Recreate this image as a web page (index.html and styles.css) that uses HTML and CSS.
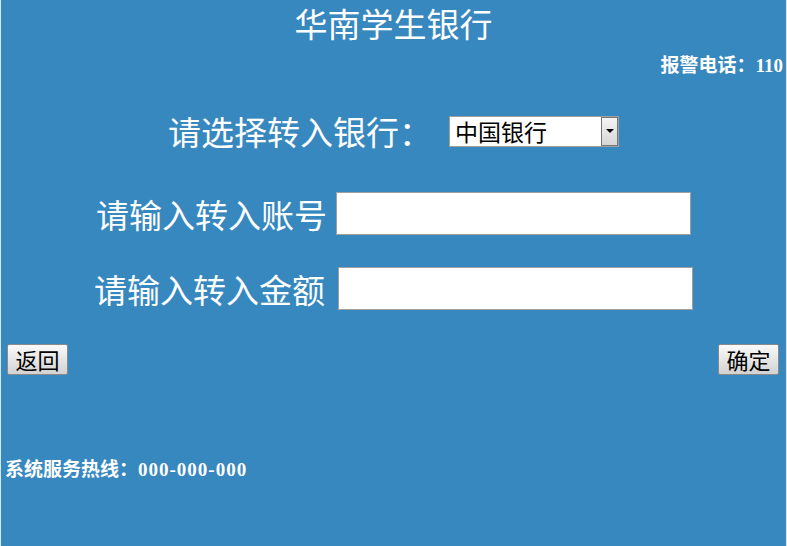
FILE: index.html
```html
<!DOCTYPE html>
<html lang="zh-CN">
<head>
<meta charset="utf-8">
<title>华南学生银行</title>
<link rel="stylesheet" href="styles.css">
</head>
<body>
<div class="page">
  <h1 class="title">华南学生银行</h1>
  <div class="alarm">报警电话：110</div>
  <form class="form">
    <div class="row row-bank">
      <label class="label">请选择转入银行：</label>
      <div class="select-wrap">
        <select class="select">
          <option>中国银行</option>
        </select>
        <span class="select-btn"><span class="tri"></span></span>
      </div>
    </div>
    <div class="row row-acct">
      <label class="label">请输入转入账号</label>
      <input class="input" type="text">
    </div>
    <div class="row row-amt">
      <label class="label">请输入转入金额</label>
      <input class="input" type="text">
    </div>
    <div class="actions">
      <button type="button" class="btn">返回</button>
      <button type="button" class="btn">确定</button>
    </div>
  </form>
  <div class="footer">系统服务热线：<span class="num">000-000-000</span></div>
</div>
</body>
</html>
```

FILE: styles.css
```css
html, body {
  margin: 0;
  padding: 0;
  height: 100%;
}
body {
  background: #3888c0;
  font-family: "Noto Sans CJK SC", sans-serif;
  color: #fff;
}
.page {
  height: 546px;
  box-sizing: border-box;
  border-left: 1px solid #d8e6f2;
  border-right: 1px solid #d8e6f2;
  padding: 0 3px;
}
.title {
  margin: 0;
  padding-top: 3px;
  font-size: 33px;
  line-height: 40px;
  font-weight: normal;
  text-align: center;
  font-family: "Noto Sans CJK SC", serif;
}
.alarm {
  margin-top: 12px;
  text-align: right;
  font-family: "Liberation Serif", "Noto Sans CJK SC", serif;
  font-weight: bold;
  font-size: 19px;
  line-height: 22px;
}
.form {
  margin: 0;
}
.row {
  display: flex;
  justify-content: center;
  align-items: center;
}
.label {
  font-size: 33px;
  line-height: 40px;
}
.row-bank {
  margin-top: 34px;
  gap: 17px;
}
.row-acct {
  margin-top: 41px;
  gap: 9px;
}
.row-amt {
  margin-top: 32px;
  gap: 13px;
}
.select-wrap {
  position: relative;
  width: 170px;
  height: 31px;
}
.select {
  appearance: none;
  -webkit-appearance: none;
  width: 170px;
  height: 31px;
  box-sizing: border-box;
  border: 1px solid #a0a0a0;
  background: #fff;
  font-family: "Noto Sans CJK SC", sans-serif;
  font-size: 23px;
  line-height: 29px;
  color: #000;
  padding: 0 0 0 5px;
  margin: 0;
  border-radius: 0;
}
.select-btn {
  position: absolute;
  right: 1px;
  top: 1px;
  width: 17px;
  height: 29px;
  box-sizing: border-box;
  border: 1px solid #777;
  background: linear-gradient(#f4f4f4, #d6d6d6);
  display: flex;
  align-items: center;
  justify-content: center;
  pointer-events: none;
}
.tri {
  width: 0;
  height: 0;
  border-left: 4px solid transparent;
  border-right: 4px solid transparent;
  border-top: 4px solid #000;
}
.input {
  width: 355px;
  height: 43px;
  box-sizing: border-box;
  border: 1px solid #a0a0a0;
  background: #fff;
  margin: 0;
  padding: 0 4px;
  font-size: 20px;
}
.actions {
  display: flex;
  justify-content: space-between;
  margin-top: 34px;
  padding: 0 4px 0 3px;
}
.btn {
  width: 61px;
  height: 31px;
  box-sizing: border-box;
  border: 1px solid #8a8a8a;
  border-radius: 2px;
  background: linear-gradient(#fafafa, #e2e2e2 60%, #d2d2d2);
  font-family: "Noto Sans CJK SC", sans-serif;
  font-size: 22px;
  line-height: 27px;
  color: #000;
  padding: 0;
  margin: 0;
}
.footer {
  margin-top: 84px;
  margin-left: 1px;
  font-family: "Liberation Serif", "Noto Sans CJK SC", serif;
  font-weight: bold;
  font-size: 19px;
  line-height: 22px;
}
.num {
  letter-spacing: 1px;
}
```
